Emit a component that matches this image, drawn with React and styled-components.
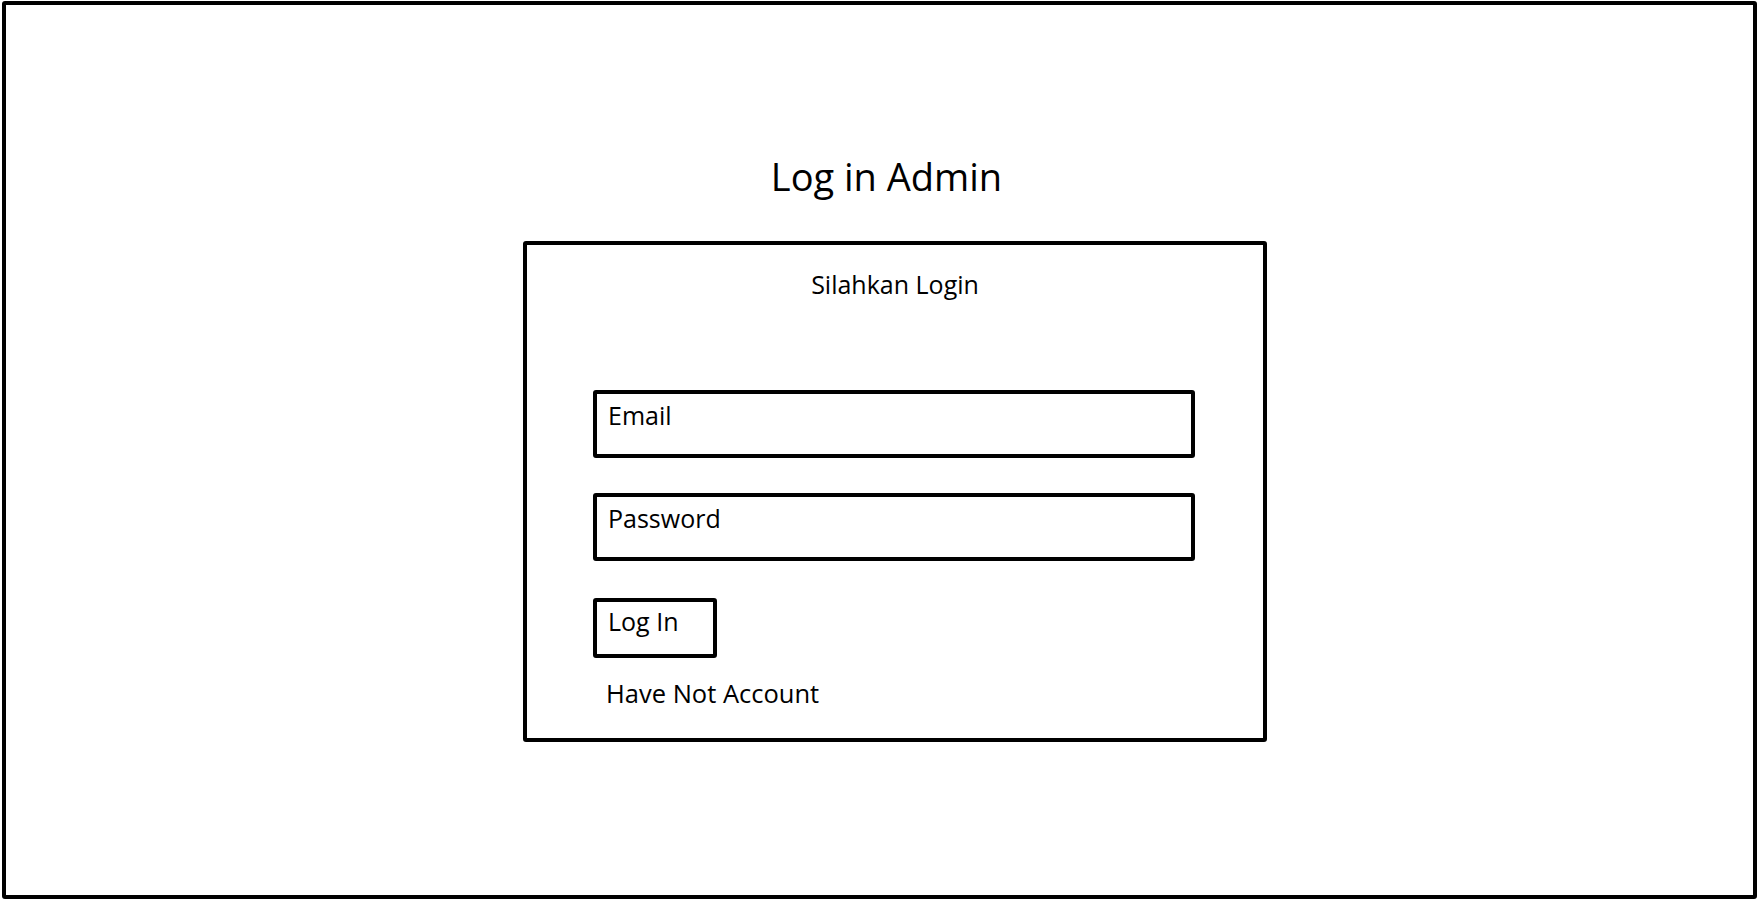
import React from "react";
import styled, { createGlobalStyle } from "styled-components";

const Global = createGlobalStyle`
  html, body { margin: 0; padding: 0; background: #ffffff; }
  body { font-family: "Open Sans", "Noto Sans", sans-serif; color: #000; }
  * { box-sizing: border-box; }
`;

const Frame = styled.div`
  margin: 1px 1px 3px 2px;
  height: 898px;
  border: 4px solid #000;
  border-radius: 3px;
  display: flex;
  flex-direction: column;
  align-items: center;
`;

const Title = styled.h1`
  margin: 147px 0 0 14px;
  font-size: 38px;
  line-height: 48px;
  font-weight: 400;
`;

const Card = styled.div`
  margin: 41px 0 0 31px;
  width: 744px;
  height: 501px;
  border: 4px solid #000;
  border-radius: 3px;
  padding: 24px 0 0 66px;
  display: flex;
  flex-direction: column;
  align-items: flex-start;
`;

const Subtitle = styled.div`
  align-self: stretch;
  margin-left: -66px;
  text-align: center;
  font-size: 25px;
  line-height: 30px;
  margin-bottom: 91px;
`;

const Field = styled.div`
  width: 602px;
  height: 68px;
  border: 4px solid #000;
  border-radius: 3px;
  padding: 6px 0 0 11px;
  font-size: 25px;
  line-height: 30px;
  margin-bottom: ${(p) => p.$gap}px;
`;

const Button = styled.div`
  width: 124px;
  height: 60px;
  border: 4px solid #000;
  border-radius: 3px;
  padding: 4px 0 0 11px;
  font-size: 25px;
  line-height: 30px;
  margin-bottom: 20px;
`;

const Link = styled.div`
  margin-left: 13px;
  font-size: 25.5px;
  line-height: 30px;
`;

export default function App() {
  return (
    <>
      <Global />
      <Frame>
        <Title>Log in Admin</Title>
        <Card>
          <Subtitle>Silahkan Login</Subtitle>
          <Field $gap={35}>Email</Field>
          <Field $gap={37}>Password</Field>
          <Button>Log In</Button>
          <Link>Have Not Account</Link>
        </Card>
      </Frame>
    </>
  );
}
